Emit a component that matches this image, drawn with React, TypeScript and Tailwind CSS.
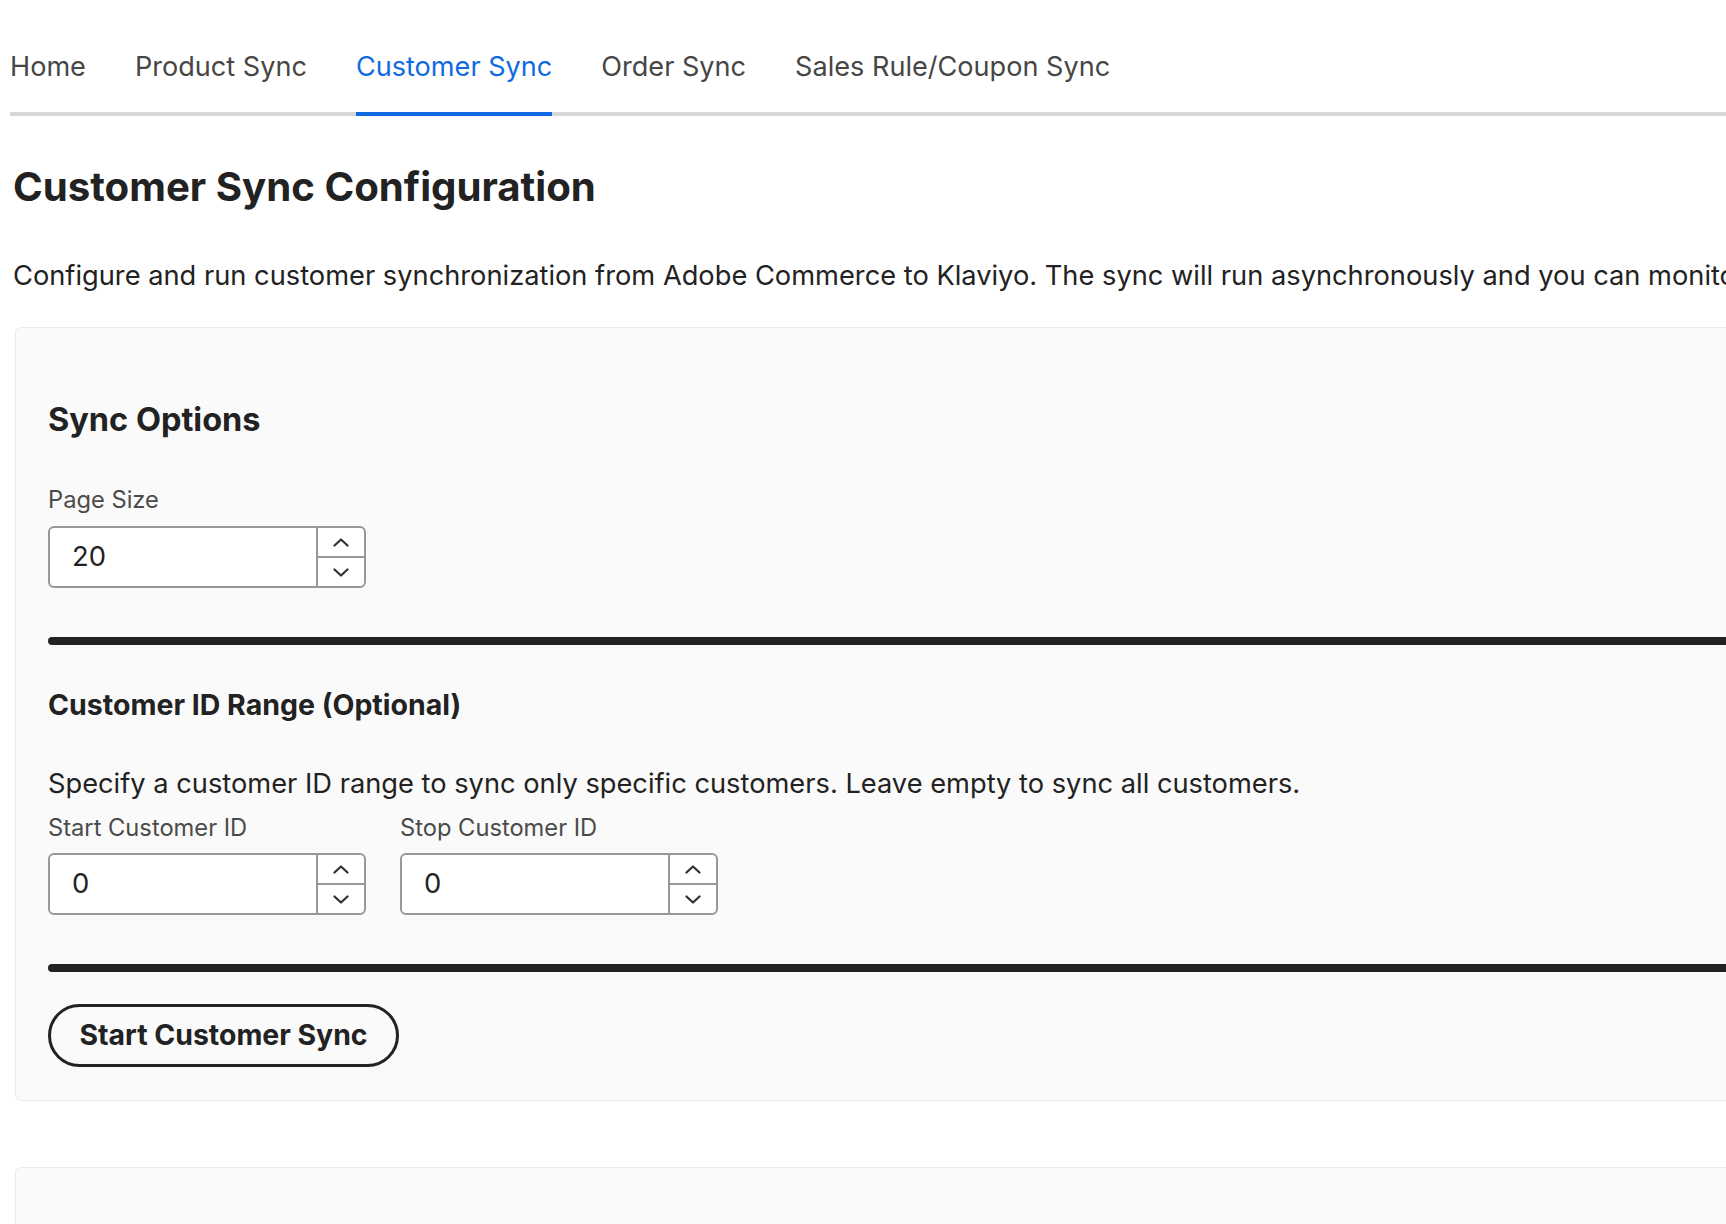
import React from 'react';

const tabs = ['Home', 'Product Sync', 'Customer Sync', 'Order Sync', 'Sales Rule/Coupon Sync'];

function Chevron({ up }: { up?: boolean }) {
  return (
    <svg width="16" height="9" viewBox="0 0 16 9" fill="none">
      <path
        d={up ? 'M1.5 7.5 L8 1.5 L14.5 7.5' : 'M1.5 1.5 L8 7.5 L14.5 1.5'}
        stroke="#333"
        strokeWidth="2.3"
        strokeLinecap="round"
        strokeLinejoin="round"
      />
    </svg>
  );
}

interface NumberFieldProps {
  label: string;
  value: string;
  gap?: 'sm' | 'md';
}

function NumberField({ label, value, gap = 'md' }: NumberFieldProps) {
  return (
    <div className="flex flex-col">
      <label className="text-[23.7px] leading-[28px] text-[#4b4b4b]">{label}</label>
      <div
        className={`${gap === 'md' ? 'mt-[12px]' : 'mt-[11px]'} flex h-[62px] w-[318px] rounded-[6px] border-2 border-[#989898] bg-white`}
      >
        <div className="flex flex-1 items-center pl-[22px] text-[27.4px] text-[#222]">{value}</div>
        <div className="flex w-[48px] flex-col border-l-2 border-[#989898]">
          <div className="flex flex-1 items-center justify-center border-b-2 border-[#989898]">
            <Chevron up />
          </div>
          <div className="flex flex-1 items-center justify-center">
            <Chevron />
          </div>
        </div>
      </div>
    </div>
  );
}

export default function App() {
  return (
    <div className="min-h-screen w-full overflow-hidden bg-white font-[family-name:Inter,sans-serif] text-[#222]">
      <div className="w-[2300px] pl-[10px]">
        <div className="flex gap-[49px] border-b-4 border-[#d7d7d7]">
          {tabs.map((tab) => (
            <div
              key={tab}
              className={`-mb-1 border-b-4 pt-[51px] pb-[29px] text-[27.1px] leading-[32px] ${
                tab === 'Customer Sync'
                  ? 'border-[#0f6ae2] text-[#0f6ae2]'
                  : 'border-transparent text-[#464646]'
              }`}
            >
              {tab}
            </div>
          ))}
        </div>

        <h1 className="mt-[48px] pl-[3px] text-[40.2px] font-bold leading-[46px]">Customer Sync Configuration</h1>

        <p className="mt-[49px] whitespace-nowrap pl-[3px] text-[27.25px] leading-[34px]">
          Configure and run customer synchronization from Adobe Commerce to Klaviyo. The sync will run asynchronously and you can monitor its progress below.
        </p>

        <div className="ml-[5px] mt-[34px] rounded-[6px] border border-[#ebebeb] bg-[#fafafa] pb-[33px] pl-[32px] pt-[73px]">
          <h2 className="text-[32.5px] font-bold leading-[38px]">Sync Options</h2>

          <div className="mt-[47px]">
            <NumberField label="Page Size" value="20" />
          </div>

          <div className="mt-[49px] h-2 rounded-l-full bg-[#222]" />

          <h3 className="mt-[43px] text-[28.5px] font-bold leading-[34px]">Customer ID Range (Optional)</h3>

          <p className="mt-[46px] whitespace-nowrap text-[27.25px] leading-[32px]">
            Specify a customer ID range to sync only specific customers. Leave empty to sync all customers.
          </p>

          <div className="mt-[14px] flex gap-[34px]">
            <NumberField label="Start Customer ID" value="0" gap="sm" />
            <NumberField label="Stop Customer ID" value="0" gap="sm" />
          </div>

          <div className="mt-[49px] h-2 rounded-l-full bg-[#222]" />

          <button className="mt-[32px] flex h-[63px] w-[351px] items-center justify-center rounded-full border-[3px] border-[#222] text-[28.4px] font-bold text-[#222]">
            Start Customer Sync
          </button>
        </div>

        <div className="ml-[5px] mt-[66px] h-[200px] rounded-[6px] border border-[#ebebeb] bg-[#fafafa]" />
      </div>
    </div>
  );
}
